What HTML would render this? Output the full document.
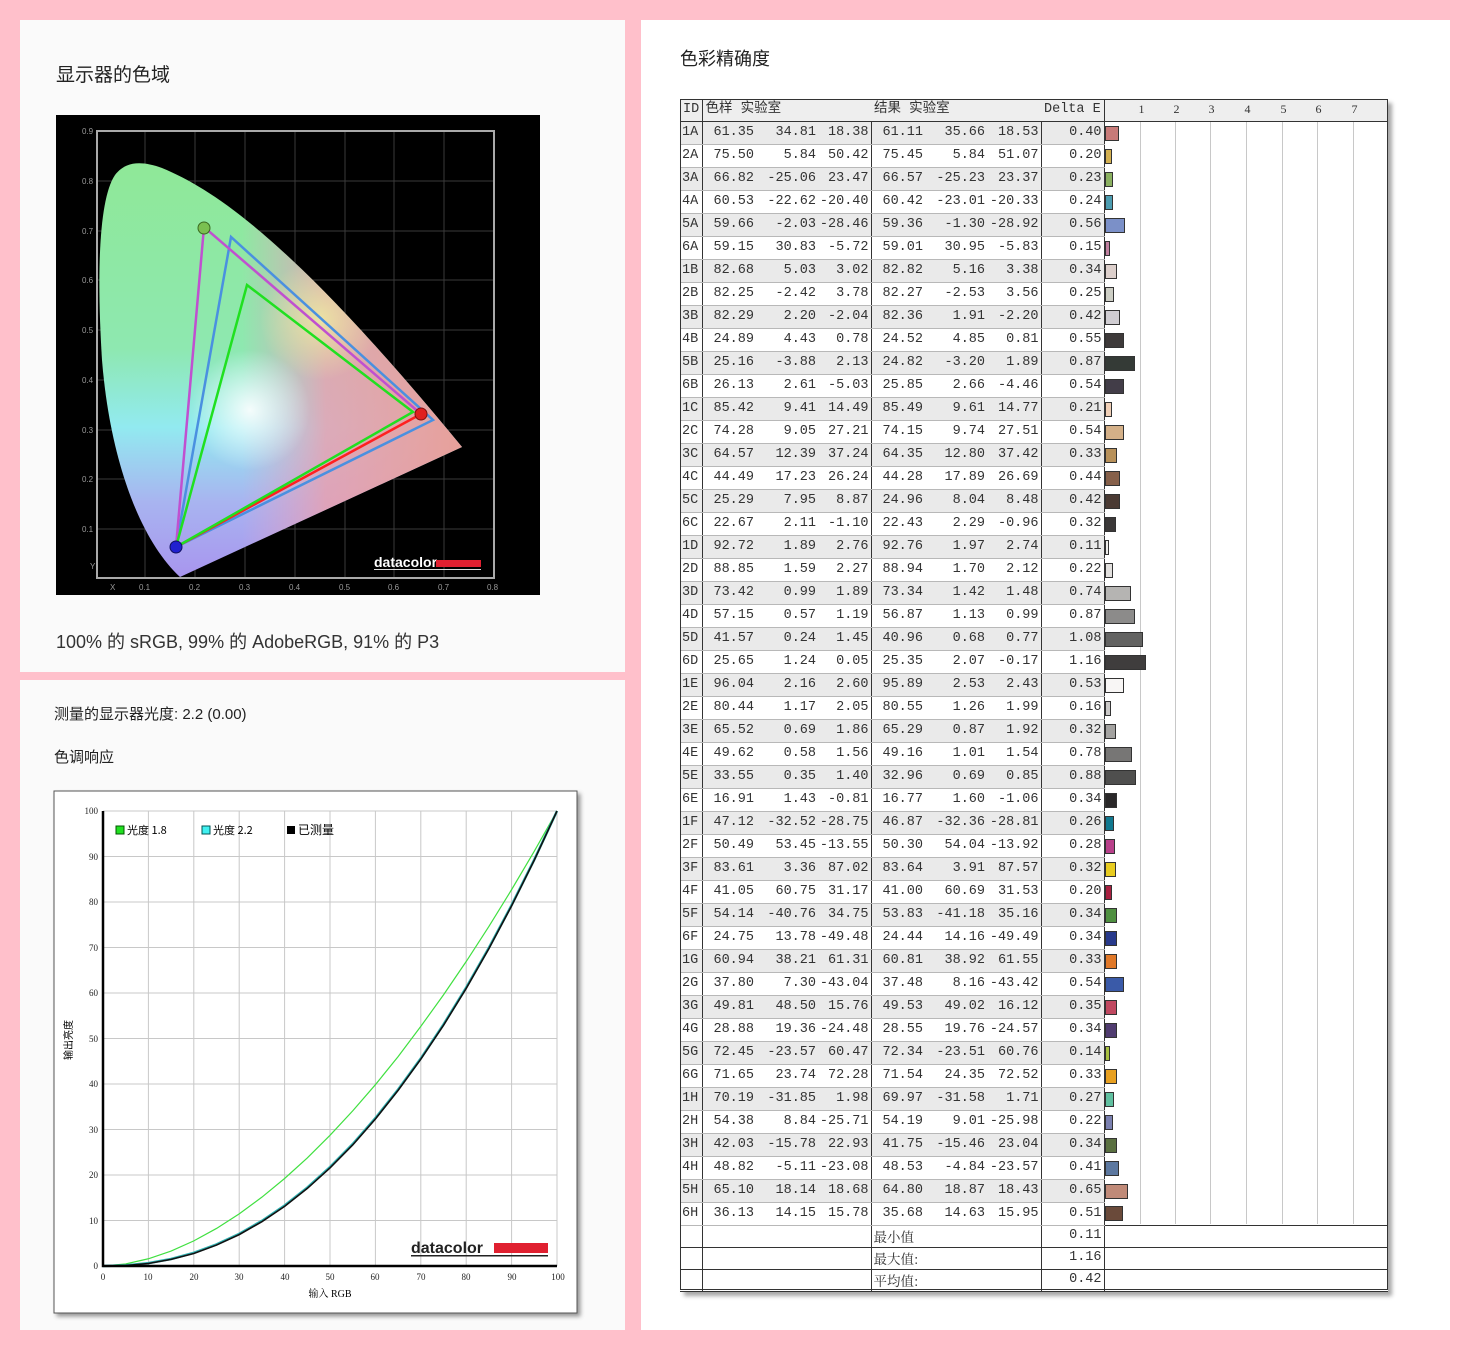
<!DOCTYPE html>
<html><head><meta charset="utf-8">
<style>
*{margin:0;padding:0;box-sizing:border-box}
body{width:1470px;height:1350px;background:#ffc0cb;position:relative;overflow:hidden;font-family:"Liberation Sans","Noto Sans CJK SC",sans-serif;color:#222}
.p{position:absolute;background:#fafafa}
.t{position:absolute;white-space:nowrap}
#tb{position:absolute;left:680px;top:99px;border-collapse:collapse;table-layout:fixed;font-family:"Liberation Mono","Noto Serif CJK SC",monospace;font-size:13.5px;color:#333;box-shadow:4px 4px 4px rgba(0,0,0,.35)}
#tb td{height:23px;text-align:right;padding:0 2px 0 0;border-bottom:1px solid #b8b8b8;white-space:nowrap;overflow:hidden;line-height:20px;vertical-align:middle}
#tb td:nth-child(1){text-align:left;padding-left:2px;border-right:1px solid #333}
#tb td:nth-child(4),#tb td:nth-child(7),#tb td:nth-child(8){border-right:1px solid #333}
#tb tr:nth-child(odd) td{background:#fff}
#tb tr:nth-child(even) td{background:#eaeaea}
#tb tr td:last-child{background:transparent!important;text-align:left;padding:0;border-bottom:none}
#tb tr.h td{background:#eee!important;border-bottom:1px solid #333;height:22px;text-align:left;padding-left:3px;font-family:"Liberation Mono","Noto Sans CJK SC",monospace;line-height:18px}
#tb tr.s td{background:#fff!important;height:22px;border-bottom:1px solid #333;line-height:18px}
#tb tr.s td:last-child{background:#fff!important}
#tb i{display:block;height:15px;border:1px solid #333;margin-top:1px}
.g{position:absolute;top:121px;height:1103px;width:1px;background:#c8c8c8}
</style></head><body>
<div class="p" style="left:20px;top:20px;width:605px;height:652px"></div>
<div class="p" style="left:20px;top:680px;width:605px;height:650px"></div>
<div class="p" style="left:641px;top:20px;width:809px;height:1310px;background:#fff"></div>

<div class="t" style="left:56px;top:60px;font-size:19px">显示器的色域</div>
<div class="t" style="left:56px;top:628px;font-size:18px;color:#333">100% 的 sRGB, 99% 的 AdobeRGB, 91% 的 P3</div>
<div class="t" style="left:54px;top:703px;font-size:15px">测量的显示器光度:  2.2 (0.00)</div>
<div class="t" style="left:54px;top:746px;font-size:15px">色调响应</div>
<div class="t" style="left:680px;top:45px;font-size:18px">色彩精确度</div>

<!-- gamut chart -->
<svg style="position:absolute;left:0;top:0" width="625" height="672">
<defs>
<clipPath id="hs"><path d="M180,577 C140,540 110,460 102,360 C97,280 98,200 115,175 C125,162 140,160 162,168 C220,192 300,250 462,447 Z"/></clipPath>
<linearGradient id="gv" x1="0" y1="0" x2="0" y2="1"><stop offset="0" stop-color="#8fe896"/><stop offset="0.45" stop-color="#8ee8b0"/><stop offset="0.63" stop-color="#92eaf0"/><stop offset="0.8" stop-color="#a8b4f0"/><stop offset="1" stop-color="#a890ee"/></linearGradient>
<linearGradient id="gh" x1="0" y1="0" x2="1" y2="0"><stop offset="0" stop-color="#e8a0c8" stop-opacity="0"/><stop offset="0.4" stop-color="#e8a0c8" stop-opacity="0"/><stop offset="0.62" stop-color="#e8a0b0" stop-opacity="0.85"/><stop offset="1" stop-color="#e8a098"/></linearGradient>
<radialGradient id="gw" cx="250" cy="410" r="60" gradientUnits="userSpaceOnUse"><stop offset="0" stop-color="#fff" stop-opacity="0.9"/><stop offset="1" stop-color="#fff" stop-opacity="0"/></radialGradient>
<radialGradient id="gy" cx="320" cy="320" r="60" gradientUnits="userSpaceOnUse"><stop offset="0" stop-color="#f0f0a0" stop-opacity="0.8"/><stop offset="1" stop-color="#f0f0a0" stop-opacity="0"/></radialGradient>
</defs>
<rect x="56" y="115" width="484" height="480" fill="#000"/>
<g stroke="#3a3a3a" stroke-width="1">
<path d="M145,131V578M195,131V578M245,131V578M295,131V578M345,131V578M394,131V578M444,131V578"/>
<path d="M97,181H494M97,231H494M97,280H494M97,330H494M97,380H494M97,430H494M97,479H494M97,529H494"/>
</g>
<rect x="97" y="131" width="397" height="447" fill="none" stroke="#aaa" stroke-width="2"/>
<g clip-path="url(#hs)">
<rect x="90" y="150" width="380" height="440" fill="url(#gv)"/>
<rect x="90" y="150" width="380" height="440" fill="url(#gh)"/>
<rect x="90" y="150" width="380" height="440" fill="url(#gy)"/>
<rect x="90" y="150" width="380" height="440" fill="url(#gw)"/>
</g>
<g fill="none" stroke-width="2.5">
<path d="M176,547 L231,237 L433,420 Z" stroke="#4a90e0"/>
<path d="M176,547 L204,227 L421,414" stroke="#c050d0"/>
<path d="M176,547 L421,414" stroke="#ff2020"/>
<path d="M176,547 L247,285 L413,412 Z" stroke="#20e020"/>
</g>
<circle cx="204" cy="228" r="6" fill="#7ac050" stroke="#3a6a20"/>
<circle cx="421" cy="414" r="6" fill="#e02020" stroke="#801010"/>
<circle cx="176" cy="547" r="6" fill="#2020d0" stroke="#101060"/>
<g font-family="Liberation Sans,sans-serif" font-size="8" fill="#999">
<text x="82" y="134">0.9</text><text x="82" y="184">0.8</text><text x="82" y="234">0.7</text><text x="82" y="283">0.6</text><text x="82" y="333">0.5</text><text x="82" y="383">0.4</text><text x="82" y="433">0.3</text><text x="82" y="482">0.2</text><text x="82" y="532">0.1</text><text x="90" y="569">Y</text>
<text x="110" y="590">X</text><text x="139" y="590">0.1</text><text x="189" y="590">0.2</text><text x="239" y="590">0.3</text><text x="289" y="590">0.4</text><text x="339" y="590">0.5</text><text x="388" y="590">0.6</text><text x="438" y="590">0.7</text><text x="487" y="590">0.8</text>
</g>
<text x="374" y="567" font-family="Liberation Sans,sans-serif" font-weight="bold" font-size="14" fill="#fff">datacolor</text>
<rect x="436" y="560" width="45" height="7" fill="#e02030"/>
<rect x="374" y="569" width="107" height="1" fill="#ddd"/>
</svg>

<!-- tone chart -->
<svg style="position:absolute;left:0;top:680px" width="625" height="650">
<rect x="54" y="111" width="523" height="522" fill="#fff" stroke="#555" style="filter:drop-shadow(3px 3px 2px rgba(0,0,0,.4))"/>
<g stroke="#c8c8c8" stroke-width="1">
<path d="M148.4,131V586M193.8,131V586M239.2,131V586M284.6,131V586M330,131V586M375.4,131V586M420.8,131V586M466.2,131V586M511.6,131V586M557,131V586"/>
<path d="M103,131H557M103,176.5H557M103,222H557M103,267.5H557M103,313H557M103,358.5H557M103,404H557M103,449.5H557M103,495H557M103,540.5H557"/>
</g>
<g transform="translate(103,586) scale(4.54,-4.55)" fill="none">
<polyline vector-effect="non-scaling-stroke" stroke="#40e040" stroke-width="1.2" points="0,0 5,0.45 10,1.59 15,3.29 20,5.52 25,8.25 30,11.45 35,15.13 40,19.23 45,23.75 50,28.72 55,34.09 60,39.85 65,46.02 70,52.66 75,59.59 80,66.92 85,74.62 90,82.72 95,91.17 100,100"/>
<polyline vector-effect="non-scaling-stroke" stroke="#30b0b0" stroke-width="2.5" points="0,0 5,.14 10,.63 15,1.54 20,2.9 25,4.74 30,7.07 35,9.92 40,13.29 45,17.24 50,21.76 55,26.81 60,32.5 65,38.79 70,45.63 75,53.1 80,61.21 85,69.94 90,79.32 95,89.33 100,100"/>
<polyline vector-effect="non-scaling-stroke" stroke="#111" stroke-width="1.6" points="0,0 5,.1 10,.55 15,1.45 20,2.75 25,4.6 30,6.9 35,9.75 40,13.1 45,17.05 50,21.55 55,26.6 60,32.3 65,38.6 70,45.45 75,52.9 80,61.0 85,69.75 90,79.15 95,89.2 100,100"/>
</g>
<path d="M103,131V586H557" fill="none" stroke="#000" stroke-width="2.5"/>
<g font-family="Liberation Serif,serif" font-size="9" fill="#222" text-anchor="end">
<text x="98" y="134">100</text><text x="98" y="180">90</text><text x="98" y="225">80</text><text x="98" y="271">70</text><text x="98" y="316">60</text><text x="98" y="362">50</text><text x="98" y="407">40</text><text x="98" y="453">30</text><text x="98" y="498">20</text><text x="98" y="544">10</text><text x="98" y="589">0</text>
</g>
<g font-family="Liberation Serif,serif" font-size="9" fill="#222" text-anchor="middle">
<text x="103" y="600">0</text><text x="148" y="600">10</text><text x="194" y="600">20</text><text x="239" y="600">30</text><text x="285" y="600">40</text><text x="330" y="600">50</text><text x="375" y="600">60</text><text x="421" y="600">70</text><text x="466" y="600">80</text><text x="512" y="600">90</text><text x="558" y="600">100</text>
</g>
<text x="330" y="617" font-family="Liberation Serif,'Noto Serif CJK SC',serif" font-size="10" text-anchor="middle">输入 RGB</text>
<text transform="translate(72,360) rotate(-90)" font-family="'Noto Sans CJK SC',sans-serif" font-size="10" text-anchor="middle">输出亮度</text>
<rect x="116" y="146" width="8" height="8" fill="#20e020" stroke="#050"/>
<text x="127" y="154" font-family="'Noto Sans CJK SC',sans-serif" font-size="11">光度 1.8</text>
<rect x="202" y="146" width="8" height="8" fill="#40f0f0" stroke="#055"/>
<text x="213" y="154" font-family="'Noto Sans CJK SC',sans-serif" font-size="11">光度 2.2</text>
<rect x="287" y="146" width="8" height="8" fill="#000"/>
<text x="298" y="154" font-family="'Noto Sans CJK SC',sans-serif" font-size="12">已测量</text>
<text x="411" y="573" font-family="Liberation Sans,sans-serif" font-weight="bold" font-size="16" fill="#222">datacolor</text>
<rect x="494" y="563" width="54" height="10" fill="#e02030"/>
<rect x="411" y="575" width="137" height="1.5" fill="#222"/>
</svg>

<!-- table background & grid -->
<div style="position:absolute;left:1104px;top:121px;width:284px;height:1103px;background:#fff"></div>
<div class="g" style="left:1140px"></div><div class="g" style="left:1175px"></div><div class="g" style="left:1210px"></div><div class="g" style="left:1246px"></div><div class="g" style="left:1282px"></div><div class="g" style="left:1317px"></div><div class="g" style="left:1353px"></div>

<table id="tb">
<colgroup><col style="width:22px"><col style="width:54px"><col style="width:62px"><col style="width:53px"><col style="width:54px"><col style="width:62px"><col style="width:54px"><col style="width:63px"><col style="width:284px"></colgroup>
<tr class="h"><td>ID</td><td colspan="3">色样 实验室</td><td colspan="3">结果 实验室</td><td>Delta E</td><td style="position:relative;font-family:'Liberation Serif',serif;font-size:12px"><span style="position:absolute;left:34px;top:1px">1</span><span style="position:absolute;left:69px;top:1px">2</span><span style="position:absolute;left:104px;top:1px">3</span><span style="position:absolute;left:140px;top:1px">4</span><span style="position:absolute;left:176px;top:1px">5</span><span style="position:absolute;left:211px;top:1px">6</span><span style="position:absolute;left:247px;top:1px">7</span></td></tr>
<tr><td>1A</td><td>61.35</td><td>34.81</td><td>18.38</td><td>61.11</td><td>35.66</td><td>18.53</td><td>0.40</td><td><i style="width:14px;background:#c87a78"></i></td></tr>
<tr><td>2A</td><td>75.50</td><td>5.84</td><td>50.42</td><td>75.45</td><td>5.84</td><td>51.07</td><td>0.20</td><td><i style="width:7px;background:#d4b050"></i></td></tr>
<tr><td>3A</td><td>66.82</td><td>-25.06</td><td>23.47</td><td>66.57</td><td>-25.23</td><td>23.37</td><td>0.23</td><td><i style="width:8px;background:#8ab060"></i></td></tr>
<tr><td>4A</td><td>60.53</td><td>-22.62</td><td>-20.40</td><td>60.42</td><td>-23.01</td><td>-20.33</td><td>0.24</td><td><i style="width:8px;background:#4c9cb0"></i></td></tr>
<tr><td>5A</td><td>59.66</td><td>-2.03</td><td>-28.46</td><td>59.36</td><td>-1.30</td><td>-28.92</td><td>0.56</td><td><i style="width:20px;background:#7b90c8"></i></td></tr>
<tr><td>6A</td><td>59.15</td><td>30.83</td><td>-5.72</td><td>59.01</td><td>30.95</td><td>-5.83</td><td>0.15</td><td><i style="width:5px;background:#c080a0"></i></td></tr>
<tr><td>1B</td><td>82.68</td><td>5.03</td><td>3.02</td><td>82.82</td><td>5.16</td><td>3.38</td><td>0.34</td><td><i style="width:12px;background:#dccfcb"></i></td></tr>
<tr><td>2B</td><td>82.25</td><td>-2.42</td><td>3.78</td><td>82.27</td><td>-2.53</td><td>3.56</td><td>0.25</td><td><i style="width:9px;background:#cdcec5"></i></td></tr>
<tr><td>3B</td><td>82.29</td><td>2.20</td><td>-2.04</td><td>82.36</td><td>1.91</td><td>-2.20</td><td>0.42</td><td><i style="width:15px;background:#d0cdd2"></i></td></tr>
<tr><td>4B</td><td>24.89</td><td>4.43</td><td>0.78</td><td>24.52</td><td>4.85</td><td>0.81</td><td>0.55</td><td><i style="width:19px;background:#3e3a3a"></i></td></tr>
<tr><td>5B</td><td>25.16</td><td>-3.88</td><td>2.13</td><td>24.82</td><td>-3.20</td><td>1.89</td><td>0.87</td><td><i style="width:30px;background:#343a36"></i></td></tr>
<tr><td>6B</td><td>26.13</td><td>2.61</td><td>-5.03</td><td>25.85</td><td>2.66</td><td>-4.46</td><td>0.54</td><td><i style="width:19px;background:#423d48"></i></td></tr>
<tr><td>1C</td><td>85.42</td><td>9.41</td><td>14.49</td><td>85.49</td><td>9.61</td><td>14.77</td><td>0.21</td><td><i style="width:7px;background:#f0cfb6"></i></td></tr>
<tr><td>2C</td><td>74.28</td><td>9.05</td><td>27.21</td><td>74.15</td><td>9.74</td><td>27.51</td><td>0.54</td><td><i style="width:19px;background:#d4b088"></i></td></tr>
<tr><td>3C</td><td>64.57</td><td>12.39</td><td>37.24</td><td>64.35</td><td>12.80</td><td>37.42</td><td>0.33</td><td><i style="width:12px;background:#b8915a"></i></td></tr>
<tr><td>4C</td><td>44.49</td><td>17.23</td><td>26.24</td><td>44.28</td><td>17.89</td><td>26.69</td><td>0.44</td><td><i style="width:15px;background:#86604a"></i></td></tr>
<tr><td>5C</td><td>25.29</td><td>7.95</td><td>8.87</td><td>24.96</td><td>8.04</td><td>8.48</td><td>0.42</td><td><i style="width:15px;background:#4a3a33"></i></td></tr>
<tr><td>6C</td><td>22.67</td><td>2.11</td><td>-1.10</td><td>22.43</td><td>2.29</td><td>-0.96</td><td>0.32</td><td><i style="width:11px;background:#3b3838"></i></td></tr>
<tr><td>1D</td><td>92.72</td><td>1.89</td><td>2.76</td><td>92.76</td><td>1.97</td><td>2.74</td><td>0.11</td><td><i style="width:4px;background:#eeedeb"></i></td></tr>
<tr><td>2D</td><td>88.85</td><td>1.59</td><td>2.27</td><td>88.94</td><td>1.70</td><td>2.12</td><td>0.22</td><td><i style="width:8px;background:#e2e0de"></i></td></tr>
<tr><td>3D</td><td>73.42</td><td>0.99</td><td>1.89</td><td>73.34</td><td>1.42</td><td>1.48</td><td>0.74</td><td><i style="width:26px;background:#b5b4b2"></i></td></tr>
<tr><td>4D</td><td>57.15</td><td>0.57</td><td>1.19</td><td>56.87</td><td>1.13</td><td>0.99</td><td>0.87</td><td><i style="width:30px;background:#8c8b8a"></i></td></tr>
<tr><td>5D</td><td>41.57</td><td>0.24</td><td>1.45</td><td>40.96</td><td>0.68</td><td>0.77</td><td>1.08</td><td><i style="width:38px;background:#636362"></i></td></tr>
<tr><td>6D</td><td>25.65</td><td>1.24</td><td>0.05</td><td>25.35</td><td>2.07</td><td>-0.17</td><td>1.16</td><td><i style="width:41px;background:#3f3d3d"></i></td></tr>
<tr><td>1E</td><td>96.04</td><td>2.16</td><td>2.60</td><td>95.89</td><td>2.53</td><td>2.43</td><td>0.53</td><td><i style="width:19px;background:#f8f6f5"></i></td></tr>
<tr><td>2E</td><td>80.44</td><td>1.17</td><td>2.05</td><td>80.55</td><td>1.26</td><td>1.99</td><td>0.16</td><td><i style="width:6px;background:#cbc9c8"></i></td></tr>
<tr><td>3E</td><td>65.52</td><td>0.69</td><td>1.86</td><td>65.29</td><td>0.87</td><td>1.92</td><td>0.32</td><td><i style="width:11px;background:#a3a2a0"></i></td></tr>
<tr><td>4E</td><td>49.62</td><td>0.58</td><td>1.56</td><td>49.16</td><td>1.01</td><td>1.54</td><td>0.78</td><td><i style="width:27px;background:#777675"></i></td></tr>
<tr><td>5E</td><td>33.55</td><td>0.35</td><td>1.40</td><td>32.96</td><td>0.69</td><td>0.85</td><td>0.88</td><td><i style="width:31px;background:#4f4f4e"></i></td></tr>
<tr><td>6E</td><td>16.91</td><td>1.43</td><td>-0.81</td><td>16.77</td><td>1.60</td><td>-1.06</td><td>0.34</td><td><i style="width:12px;background:#2a2829"></i></td></tr>
<tr><td>1F</td><td>47.12</td><td>-32.52</td><td>-28.75</td><td>46.87</td><td>-32.36</td><td>-28.81</td><td>0.26</td><td><i style="width:9px;background:#10788f"></i></td></tr>
<tr><td>2F</td><td>50.49</td><td>53.45</td><td>-13.55</td><td>50.30</td><td>54.04</td><td>-13.92</td><td>0.28</td><td><i style="width:10px;background:#b8408a"></i></td></tr>
<tr><td>3F</td><td>83.61</td><td>3.36</td><td>87.02</td><td>83.64</td><td>3.91</td><td>87.57</td><td>0.32</td><td><i style="width:11px;background:#e8cc20"></i></td></tr>
<tr><td>4F</td><td>41.05</td><td>60.75</td><td>31.17</td><td>41.00</td><td>60.69</td><td>31.53</td><td>0.20</td><td><i style="width:7px;background:#a82040"></i></td></tr>
<tr><td>5F</td><td>54.14</td><td>-40.76</td><td>34.75</td><td>53.83</td><td>-41.18</td><td>35.16</td><td>0.34</td><td><i style="width:12px;background:#4f9040"></i></td></tr>
<tr><td>6F</td><td>24.75</td><td>13.78</td><td>-49.48</td><td>24.44</td><td>14.16</td><td>-49.49</td><td>0.34</td><td><i style="width:12px;background:#283a8c"></i></td></tr>
<tr><td>1G</td><td>60.94</td><td>38.21</td><td>61.31</td><td>60.81</td><td>38.92</td><td>61.55</td><td>0.33</td><td><i style="width:12px;background:#e07828"></i></td></tr>
<tr><td>2G</td><td>37.80</td><td>7.30</td><td>-43.04</td><td>37.48</td><td>8.16</td><td>-43.42</td><td>0.54</td><td><i style="width:19px;background:#3a5aa8"></i></td></tr>
<tr><td>3G</td><td>49.81</td><td>48.50</td><td>15.76</td><td>49.53</td><td>49.02</td><td>16.12</td><td>0.35</td><td><i style="width:12px;background:#c04860"></i></td></tr>
<tr><td>4G</td><td>28.88</td><td>19.36</td><td>-24.48</td><td>28.55</td><td>19.76</td><td>-24.57</td><td>0.34</td><td><i style="width:12px;background:#503c70"></i></td></tr>
<tr><td>5G</td><td>72.45</td><td>-23.57</td><td>60.47</td><td>72.34</td><td>-23.51</td><td>60.76</td><td>0.14</td><td><i style="width:5px;background:#a8c040"></i></td></tr>
<tr><td>6G</td><td>71.65</td><td>23.74</td><td>72.28</td><td>71.54</td><td>24.35</td><td>72.52</td><td>0.33</td><td><i style="width:12px;background:#e8a020"></i></td></tr>
<tr><td>1H</td><td>70.19</td><td>-31.85</td><td>1.98</td><td>69.97</td><td>-31.58</td><td>1.71</td><td>0.27</td><td><i style="width:9px;background:#60c0a0"></i></td></tr>
<tr><td>2H</td><td>54.38</td><td>8.84</td><td>-25.71</td><td>54.19</td><td>9.01</td><td>-25.98</td><td>0.22</td><td><i style="width:8px;background:#7a80b0"></i></td></tr>
<tr><td>3H</td><td>42.03</td><td>-15.78</td><td>22.93</td><td>41.75</td><td>-15.46</td><td>23.04</td><td>0.34</td><td><i style="width:12px;background:#5a7040"></i></td></tr>
<tr><td>4H</td><td>48.82</td><td>-5.11</td><td>-23.08</td><td>48.53</td><td>-4.84</td><td>-23.57</td><td>0.41</td><td><i style="width:14px;background:#5c78a0"></i></td></tr>
<tr><td>5H</td><td>65.10</td><td>18.14</td><td>18.68</td><td>64.80</td><td>18.87</td><td>18.43</td><td>0.65</td><td><i style="width:23px;background:#c08a78"></i></td></tr>
<tr><td>6H</td><td>36.13</td><td>14.15</td><td>15.78</td><td>35.68</td><td>14.63</td><td>15.95</td><td>0.51</td><td><i style="width:18px;background:#6a4a3a"></i></td></tr>
<tr class="s"><td></td><td colspan="3" style="border-right:1px solid #333"></td><td colspan="3" style="text-align:left;padding-left:2px;border-right:1px solid #333;font-family:'Noto Serif CJK SC',serif">最小值</td><td style="border-right:1px solid #333">0.11</td><td style="border-top:1px solid #333"></td></tr>
<tr class="s"><td></td><td colspan="3" style="border-right:1px solid #333"></td><td colspan="3" style="text-align:left;padding-left:2px;border-right:1px solid #333;font-family:'Noto Serif CJK SC',serif">最大值:</td><td style="border-right:1px solid #333">1.16</td><td></td></tr>
<tr class="s"><td></td><td colspan="3" style="border-right:1px solid #333"></td><td colspan="3" style="text-align:left;padding-left:2px;border-right:1px solid #333;font-family:'Noto Serif CJK SC',serif">平均值:</td><td style="border-right:1px solid #333">0.42</td><td></td></tr>
</table>
<div style="position:absolute;left:680px;top:99px;width:708px;height:1191px;border:1px solid #333;pointer-events:none"></div>
</body></html>
